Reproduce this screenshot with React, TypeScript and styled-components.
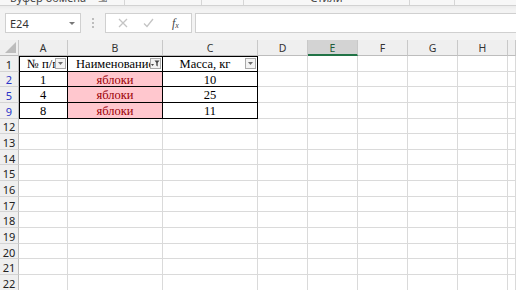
import React from "react";
import styled, { createGlobalStyle } from "styled-components";

const Global = createGlobalStyle`
  html, body { margin: 0; padding: 0; background: #fff; overflow: hidden; }
  body { width: 516px; height: 290px; font-family: "Noto Sans", "Open Sans", sans-serif; }
  * { box-sizing: border-box; }
`;

const Page = styled.div`
  width: 516px;
  height: 290px;
  display: flex;
  flex-direction: column;
  overflow: hidden;
`;

const Ribbon = styled.div`
  height: 6px;
  flex: none;
  background: #f7f7f7;
  border-bottom: 1px solid #d2d2d2;
  display: flex;
  align-items: flex-end;
  overflow: hidden;
`;

const RibbonGroup = styled.div<{ $w: number; $center?: boolean }>`
  width: ${(p) => p.$w}px;
  flex: none;
  height: 100%;
  border-right: 1px solid #d6d6d6;
  display: flex;
  align-items: flex-end;
  justify-content: ${(p) => (p.$center ? "center" : "flex-start")};
  padding-left: ${(p) => (p.$center ? 0 : 10)}px;
  gap: 12px;
`;

const RibbonLabel = styled.span`
  font-size: 11px;
  line-height: 12px;
  height: 12px;
  color: #444;
  white-space: nowrap;
  margin-bottom: 1px;
  flex: none;
`;

const FormulaArea = styled.div`
  height: 34px;
  flex: none;
  background: linear-gradient(#ebebeb, #f3f3f3 4px, #f3f3f3);
  display: flex;
  align-items: flex-start;
  padding-top: 7px;
  padding-left: 5px;
`;

const NameBox = styled.div`
  width: 76px;
  height: 20px;
  background: #fff;
  border: 1px solid #d0d0d0;
  display: flex;
  align-items: center;
  justify-content: space-between;
  padding: 0 5px 0 4px;
  font-size: 11px;
  color: #333;
`;

const Caret = styled.span`
  width: 0;
  height: 0;
  border-left: 3px solid transparent;
  border-right: 3px solid transparent;
  border-top: 3px solid #777;
`;

const Dots = styled.div`
  width: 24px;
  height: 20px;
  display: flex;
  flex-direction: column;
  align-items: center;
  justify-content: center;
  gap: 2px;
  & > i {
    width: 2px;
    height: 2px;
    background: #bdbdbd;
    display: block;
  }
`;

const ButtonsBox = styled.div`
  width: 87px;
  height: 20px;
  background: #fff;
  border: 1px solid #d0d0d0;
  display: flex;
  align-items: center;
  gap: 15px;
  padding: 0 0 0 12px;
  margin-right: 3px;
`;

const Fx = styled.span`
  font-family: "Liberation Serif", serif;
  font-style: italic;
  font-size: 12px;
  color: #444;
  margin-left: 3px;
  & sub { font-size: 8px; vertical-align: -1px; }
`;

const FormulaInput = styled.div`
  flex: 1;
  height: 20px;
  background: #fff;
  border: 1px solid #d0d0d0;
  border-right: none;
`;

const Sheet = styled.div`
  flex: 1;
  display: grid;
  grid-template-columns: 19px 49px 95px 95px 50px 50px 50px 50px 50px 1fr;
  grid-template-rows: 16px repeat(15, 15.65px);
  overflow: hidden;
`;

const Corner = styled.div`
  background: #efefef;
  border-right: 1px solid #c8c8c8;
  border-bottom: 1px solid #bdbdbd;
  display: flex;
  align-items: flex-end;
  justify-content: flex-end;
  padding: 0 2px 2px 0;
`;

const ColHead = styled.div<{ $sel?: boolean }>`
  background: ${(p) => (p.$sel ? "#d3d3d3" : "#efefef")};
  border-right: 1px solid #c8c8c8;
  border-bottom: ${(p) => (p.$sel ? "2px solid #217346" : "1px solid #bdbdbd")};
  display: flex;
  align-items: center;
  justify-content: center;
  padding-top: 2px;
  font-family: "Noto Sans", sans-serif;
  font-size: 10.5px;
  color: ${(p) => (p.$sel ? "#1f5d3a" : "#333")};
  line-height: 1;
`;

const RowHead = styled.div<{ $blue?: boolean }>`
  background: #efefef;
  border-right: 1px solid #bdbdbd;
  border-bottom: 1px solid #d4d4d4;
  display: flex;
  align-items: center;
  justify-content: center;
  padding-top: 2px;
  font-family: "Noto Sans", sans-serif;
  font-size: 11px;
  color: ${(p) => (p.$blue ? "#2a36c8" : "#222")};
  line-height: 1;
`;

const Cell = styled.div<{
  $table?: boolean;
  $left?: boolean;
  $top?: boolean;
  $pink?: boolean;
  $padRight?: number;
}>`
  position: relative;
  background: ${(p) => (p.$pink ? "#ffc7ce" : "#fff")};
  border-right: 1px solid ${(p) => (p.$table ? "#000" : "#dadada")};
  border-bottom: 1px solid ${(p) => (p.$table ? "#000" : "#dadada")};
  box-shadow: ${(p) =>
    [p.$left ? "inset 1px 0 0 #000" : "", p.$top ? "inset 0 1px 0 #000" : ""]
      .filter(Boolean)
      .join(", ") || "none"};
  display: flex;
  align-items: center;
  justify-content: center;
  padding-top: 2px;
  padding-right: ${(p) => p.$padRight ?? 0}px;
  font-family: "Liberation Serif", "Times New Roman", serif;
  font-size: 12.5px;
  color: ${(p) => (p.$pink ? "#9c0006" : "#000")};
  white-space: nowrap;
  overflow: hidden;
  line-height: 1;
`;

const FilterBtn = styled.span`
  position: absolute;
  right: 1px;
  top: 2px;
  width: 11px;
  height: 11px;
  background: #f3f3f3;
  border: 1px solid #a9a9a9;
  display: flex;
  align-items: center;
  justify-content: center;
`;

const Tri = () => (
  <svg width="5" height="3" viewBox="0 0 5 3">
    <path d="M0 0H5L2.5 3Z" fill="#6d6d6d" />
  </svg>
);

const FunnelIcon = () => (
  <svg width="9" height="7" viewBox="0 0 9 7">
    <path d="M0 4H3L1.5 6Z" fill="#444" />
    <path d="M3.5 0.5H8.5L6.7 2.8V6.5L5.3 5.6V2.8Z" fill="#444" />
  </svg>
);

const XIcon = () => (
  <svg width="10" height="10" viewBox="0 0 10 10">
    <path d="M1 1L9 9M9 1L1 9" stroke="#c4c4c4" strokeWidth="1.3" />
  </svg>
);

const CheckIcon = () => (
  <svg width="11" height="10" viewBox="0 0 11 10">
    <path d="M1 5.5L4 8.5L10 1" stroke="#c4c4c4" strokeWidth="1.3" fill="none" />
  </svg>
);

const cols = ["A", "B", "C", "D", "E", "F", "G", "H", ""];
const rowNums = ["1", "2", "5", "9", "12", "13", "14", "15", "16", "17", "18", "19", "20", "21", "22"];

type CellData = { text: string; pink?: boolean; filter?: "plain" | "active"; padRight?: number };

const table: CellData[][] = [
  [
    { text: "№ п/п", filter: "plain" },
    { text: "Наименование", filter: "active" },
    { text: "Масса, кг", filter: "plain", padRight: 10 },
  ],
  [{ text: "1" }, { text: "яблоки", pink: true }, { text: "10" }],
  [{ text: "4" }, { text: "яблоки", pink: true }, { text: "25" }],
  [{ text: "8" }, { text: "яблоки", pink: true }, { text: "11" }],
];

export default function App() {
  return (
    <Page>
      <Global />
      <Ribbon>
        <RibbonGroup $w={125}>
          <RibbonLabel>Буфер обмена</RibbonLabel>
          <RibbonLabel>⇲</RibbonLabel>
        </RibbonGroup>
        <RibbonGroup $w={77} />
        <RibbonGroup $w={42} />
        <RibbonGroup $w={166} $center>
          <RibbonLabel>Стили</RibbonLabel>
        </RibbonGroup>
        <RibbonGroup $w={45} />
      </Ribbon>
      <FormulaArea>
        <NameBox>
          <span>E24</span>
          <Caret />
        </NameBox>
        <Dots>
          <i />
          <i />
          <i />
        </Dots>
        <ButtonsBox>
          <XIcon />
          <CheckIcon />
          <Fx>
            f<sub>x</sub>
          </Fx>
        </ButtonsBox>
        <FormulaInput />
      </FormulaArea>
      <Sheet>
        <Corner>
          <svg width="11" height="11" viewBox="0 0 11 11">
            <path d="M11 0V11H0Z" fill="#bcbcbc" />
          </svg>
        </Corner>
        {cols.map((c, i) => (
          <ColHead key={i} $sel={c === "E"}>
            {c}
          </ColHead>
        ))}
        {rowNums.map((n, r) => (
          <React.Fragment key={n}>
            <RowHead $blue={n === "2" || n === "5" || n === "9"}>{n}</RowHead>
            {cols.map((_, c) => {
              const d = r < 4 && c < 3 ? table[r][c] : undefined;
              return (
                <Cell
                  key={c}
                  $table={!!d}
                  $left={!!d && c === 0}
                  $top={!!d && r === 0}
                  $pink={d?.pink}
                  $padRight={d?.padRight}
                >
                  {d?.text}
                  {d?.filter && (
                    <FilterBtn>{d.filter === "active" ? <FunnelIcon /> : <Tri />}</FilterBtn>
                  )}
                </Cell>
              );
            })}
          </React.Fragment>
        ))}
      </Sheet>
    </Page>
  );
}
